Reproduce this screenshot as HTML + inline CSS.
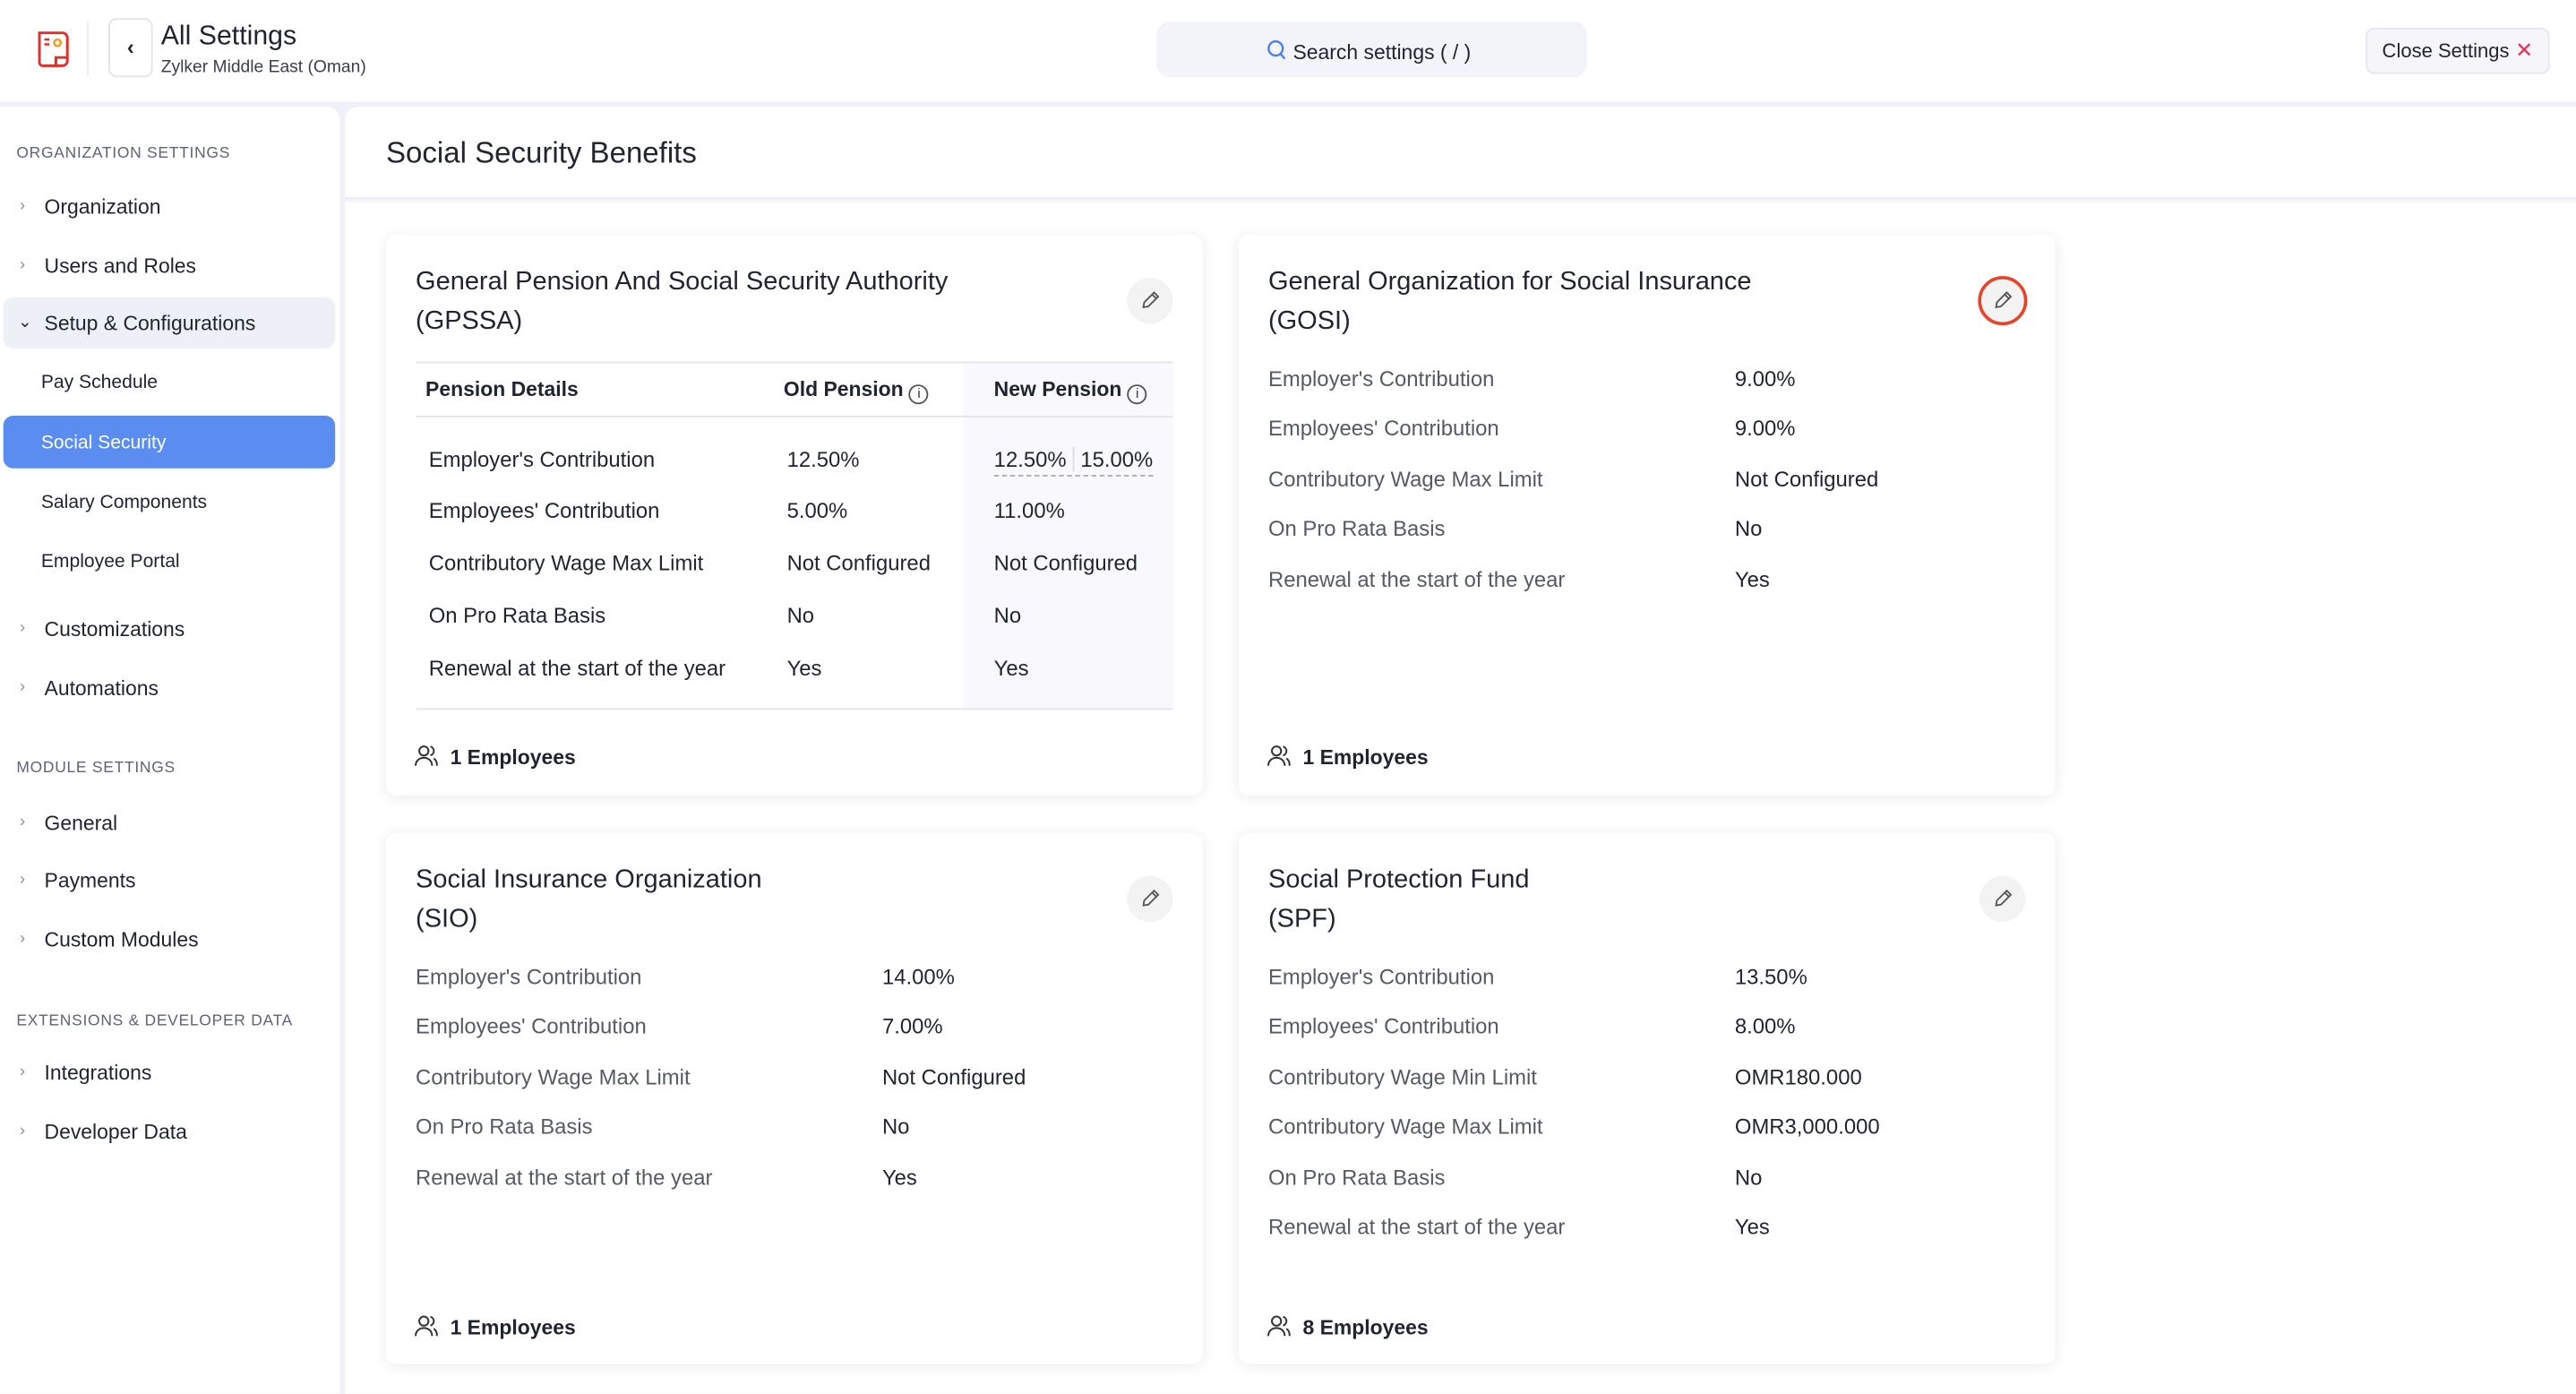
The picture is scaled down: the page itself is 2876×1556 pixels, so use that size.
<!DOCTYPE html>
<html><head><meta charset="utf-8">
<style>
*{margin:0;padding:0;box-sizing:border-box}
html,body{width:2876px;height:1556px;overflow:hidden;background:#f0f1f8}
#r{position:absolute;left:0;top:0;width:1568px;height:848px;transform:scale(1.83418);transform-origin:0 0;font-family:"Liberation Sans",sans-serif;color:#1f2430;background:#f0f1f8}
.a{position:absolute;white-space:nowrap}
.t{position:absolute;white-space:nowrap;line-height:20px;font-size:13px;margin-top:1px}
.sec{font-size:9.5px;color:#5f6472;letter-spacing:.4px;line-height:14px}
.nav{font-size:12.5px;color:#1f2430}
.chev{position:absolute;font-size:10px;color:#8a8f9c;line-height:20px;margin-top:1px}
.card{position:absolute;background:#fff;border-radius:6px;box-shadow:0 1px 8px rgba(30,40,80,.09)}
.ct{font-size:15.8px;line-height:24px;color:#1f2430;margin-top:1px}
.lb{color:#555a63}
.b{font-weight:bold;font-size:12.5px}
.edit{position:absolute;width:28px;height:28px;border-radius:50%;background:#f3f3f4}
.edit svg{position:absolute;left:7px;top:7px}
</style></head><body><div id="r">
<!-- header -->
<div class="a" style="left:0;top:0;width:1568px;height:62px;background:#fff"></div>
<svg class="a" style="left:21px;top:17px" width="24" height="26" viewBox="0 0 24 26"><path d="M3 3h14a3 3 0 0 1 3 3v12h-7v5h-8a2 2 0 0 1-2-2z" fill="none" stroke="#e0302a" stroke-width="1.6"/><path d="M13 18v5h4a3 3 0 0 0 3-3v-2" fill="none" stroke="#e0302a" stroke-width="1.6"/><path d="M6 7h3M6 10h3" stroke="#e0302a" stroke-width="1.4"/><circle cx="14" cy="9" r="2" fill="none" stroke="#f0a020" stroke-width="1.4"/></svg>
<div class="a" style="left:53px;top:13px;width:1px;height:33px;background:#ececf2"></div>
<div class="a" style="left:66px;top:11px;width:27px;height:36px;border:1px solid #e2e3ea;border-radius:5px;text-align:center;line-height:34px;font-size:13px;font-weight:bold">‹</div>
<div class="t" style="left:98px;top:11px;font-size:16.5px">All Settings</div>
<div class="t" style="left:98px;top:30px;font-size:10.5px;color:#3a3f4a">Zylker Middle East (Oman)</div>
<div class="a" style="left:704px;top:13px;width:262px;height:34px;background:#f3f3fa;border-radius:8px"></div>
<svg class="a" style="left:771px;top:24px" width="12" height="13" viewBox="0 0 12 13"><circle cx="5.5" cy="5.5" r="4.3" fill="none" stroke="#4a7ef0" stroke-width="1.3"/><path d="M8.5 8.8l2.5 3" stroke="#4a7ef0" stroke-width="1.3"/></svg>
<div class="t" style="left:787px;top:21px;font-size:12.5px">Search settings ( / )</div>
<div class="a" style="left:1440px;top:17px;width:112px;height:28px;background:#f5f5fa;border:1px solid #e6e7ee;border-radius:5px"></div>
<div class="t" style="left:1450px;top:20px;font-size:12px">Close Settings</div>
<div class="t" style="left:1531px;top:20px;font-size:13px;color:#e8325a">✕</div>
<!-- sidebar -->
<div class="a" style="left:0;top:65px;width:207px;height:783px;background:#fff;border-radius:0 8px 0 0"></div>
<div class="t sec" style="left:10px;top:86px">ORGANIZATION SETTINGS</div>
<div class="chev" style="left:12px;top:115px">›</div><div class="t nav" style="left:27px;top:115px">Organization</div>
<div class="chev" style="left:12px;top:151px">›</div><div class="t nav" style="left:27px;top:151px">Users and Roles</div>
<div class="a" style="left:2px;top:181px;width:202px;height:31px;background:#eef0f8;border-radius:6px"></div>
<div class="t nav" style="left:11px;top:186px;font-size:10px">⌄</div><div class="t nav" style="left:27px;top:186px">Setup &amp; Configurations</div>
<div class="t nav" style="left:25px;top:222px;font-size:11.5px">Pay Schedule</div>
<div class="a" style="left:2px;top:253px;width:202px;height:32px;background:#5a8def;border-radius:6px"></div>
<div class="t nav" style="left:25px;top:259px;font-size:11.5px;color:#fff">Social Security</div>
<div class="t nav" style="left:25px;top:295px;font-size:11.5px">Salary Components</div>
<div class="t nav" style="left:25px;top:331px;font-size:11.5px">Employee Portal</div>
<div class="chev" style="left:12px;top:372px">›</div><div class="t nav" style="left:27px;top:372px">Customizations</div>
<div class="chev" style="left:12px;top:408px">›</div><div class="t nav" style="left:27px;top:408px">Automations</div>
<div class="t sec" style="left:10px;top:460px">MODULE SETTINGS</div>
<div class="chev" style="left:12px;top:490px">›</div><div class="t nav" style="left:27px;top:490px">General</div>
<div class="chev" style="left:12px;top:525px">›</div><div class="t nav" style="left:27px;top:525px">Payments</div>
<div class="chev" style="left:12px;top:561px">›</div><div class="t nav" style="left:27px;top:561px">Custom Modules</div>
<div class="t sec" style="left:10px;top:614px">EXTENSIONS &amp; DEVELOPER DATA</div>
<div class="chev" style="left:12px;top:642px">›</div><div class="t nav" style="left:27px;top:642px">Integrations</div>
<div class="chev" style="left:12px;top:678px">›</div><div class="t nav" style="left:27px;top:678px">Developer Data</div>
<!-- content -->
<div class="a" style="left:210px;top:65px;width:1358px;height:783px;background:#fff;border-radius:8px 0 0 0"></div>
<div class="a" style="left:210px;top:120px;width:1358px;height:4px;background:linear-gradient(#e9eaef,rgba(255,255,255,0))"></div>
<div class="t" style="left:235px;top:81px;font-size:18px;line-height:22px;color:#222630">Social Security Benefits</div>

<!-- card 1 -->
<div class="card" style="left:235px;top:143px;width:497px;height:341px"></div>
<div class="a ct" style="left:253px;top:159px">General Pension And Social Security Authority<br>(GPSSA)</div>
<div class="edit" style="left:686px;top:169px"><svg width="14" height="14" viewBox="0 0 14 14"><path d="M3 11l.5-3L9.5 2l2.5 2.5-6 6z M8.3 3.2l2.5 2.5" fill="none" stroke="#555" stroke-width="1"/></svg></div>
<div class="a" style="left:586px;top:220px;width:128px;height:211px;background:#f8f8fd"></div>
<div class="a" style="left:253px;top:220px;width:461px;height:1px;background:#e3e4e8"></div>
<div class="a" style="left:253px;top:253px;width:461px;height:1px;background:#e3e4e8"></div>
<div class="a" style="left:253px;top:431px;width:461px;height:1px;background:#e3e4e8"></div>
<div class="t b" style="left:259px;top:226px">Pension Details</div>
<div class="t b" style="left:477px;top:226px">Old Pension <span style="display:inline-block;width:12px;height:12px;border:1px solid #555;border-radius:50%;font-size:8px;line-height:10px;text-align:center;vertical-align:-1px;font-weight:normal">i</span></div>
<div class="t b" style="left:605px;top:226px">New Pension <span style="display:inline-block;width:12px;height:12px;border:1px solid #555;border-radius:50%;font-size:8px;line-height:10px;text-align:center;vertical-align:-1px;font-weight:normal">i</span></div>
<div class="t" style="left:261px;top:269px">Employer's Contribution</div><div class="t" style="left:479px;top:269px">12.50%</div>
<div class="t" style="left:605px;top:269px;border-bottom:1px dashed #aaa;line-height:19px">12.50% <span style="border-left:1px solid #ddd;padding-left:4px">15.00%</span></div>
<div class="t" style="left:261px;top:300px">Employees' Contribution</div><div class="t" style="left:479px;top:300px">5.00%</div><div class="t" style="left:605px;top:300px">11.00%</div>
<div class="t" style="left:261px;top:332px">Contributory Wage Max Limit</div><div class="t" style="left:479px;top:332px">Not Configured</div><div class="t" style="left:605px;top:332px">Not Configured</div>
<div class="t" style="left:261px;top:364px">On Pro Rata Basis</div><div class="t" style="left:479px;top:364px">No</div><div class="t" style="left:605px;top:364px">No</div>
<div class="t" style="left:261px;top:396px">Renewal at the start of the year</div><div class="t" style="left:479px;top:396px">Yes</div><div class="t" style="left:605px;top:396px">Yes</div>
<svg class="a" style="left:252px;top:453px" width="15" height="14" viewBox="0 0 15 14"><circle cx="6" cy="4" r="2.8" fill="none" stroke="#333" stroke-width="1.1"/><path d="M1 13c0-3 2.2-4.8 5-4.8s5 1.8 5 4.8M10 1.3a2.8 2.8 0 0 1 0 5.4M12 8.6c1.3.7 2 2.2 2 4.4" fill="none" stroke="#333" stroke-width="1.1"/></svg>
<div class="t b" style="left:274px;top:450px">1 Employees</div>

<!-- card 2 -->
<div class="card" style="left:754px;top:143px;width:497px;height:341px"></div>
<div class="a ct" style="left:772px;top:159px">General Organization for Social Insurance<br>(GOSI)</div>
<div class="edit" style="border:2px solid #e8442a;width:30px;height:30px;left:1204px;top:168px"><svg width="14" height="14" viewBox="0 0 14 14" style="left:6px;top:6px"><path d="M3 11l.5-3L9.5 2l2.5 2.5-6 6z M8.3 3.2l2.5 2.5" fill="none" stroke="#555" stroke-width="1"/></svg></div>
<div class="t lb" style="left:772px;top:220px">Employer's Contribution</div><div class="t" style="left:1056px;top:220px">9.00%</div>
<div class="t lb" style="left:772px;top:250px">Employees' Contribution</div><div class="t" style="left:1056px;top:250px">9.00%</div>
<div class="t lb" style="left:772px;top:281px">Contributory Wage Max Limit</div><div class="t" style="left:1056px;top:281px">Not Configured</div>
<div class="t lb" style="left:772px;top:311px">On Pro Rata Basis</div><div class="t" style="left:1056px;top:311px">No</div>
<div class="t lb" style="left:772px;top:342px">Renewal at the start of the year</div><div class="t" style="left:1056px;top:342px">Yes</div>
<svg class="a" style="left:771px;top:453px" width="15" height="14" viewBox="0 0 15 14"><circle cx="6" cy="4" r="2.8" fill="none" stroke="#333" stroke-width="1.1"/><path d="M1 13c0-3 2.2-4.8 5-4.8s5 1.8 5 4.8M10 1.3a2.8 2.8 0 0 1 0 5.4M12 8.6c1.3.7 2 2.2 2 4.4" fill="none" stroke="#333" stroke-width="1.1"/></svg>
<div class="t b" style="left:793px;top:450px">1 Employees</div>

<!-- card 3 -->
<div class="card" style="left:235px;top:507px;width:497px;height:323px"></div>
<div class="a ct" style="left:253px;top:523px">Social Insurance Organization<br>(SIO)</div>
<div class="edit" style="left:686px;top:533px"><svg width="14" height="14" viewBox="0 0 14 14"><path d="M3 11l.5-3L9.5 2l2.5 2.5-6 6z M8.3 3.2l2.5 2.5" fill="none" stroke="#555" stroke-width="1"/></svg></div>
<div class="t lb" style="left:253px;top:584px">Employer's Contribution</div><div class="t" style="left:537px;top:584px">14.00%</div>
<div class="t lb" style="left:253px;top:614px">Employees' Contribution</div><div class="t" style="left:537px;top:614px">7.00%</div>
<div class="t lb" style="left:253px;top:645px">Contributory Wage Max Limit</div><div class="t" style="left:537px;top:645px">Not Configured</div>
<div class="t lb" style="left:253px;top:675px">On Pro Rata Basis</div><div class="t" style="left:537px;top:675px">No</div>
<div class="t lb" style="left:253px;top:706px">Renewal at the start of the year</div><div class="t" style="left:537px;top:706px">Yes</div>
<svg class="a" style="left:252px;top:800px" width="15" height="14" viewBox="0 0 15 14"><circle cx="6" cy="4" r="2.8" fill="none" stroke="#333" stroke-width="1.1"/><path d="M1 13c0-3 2.2-4.8 5-4.8s5 1.8 5 4.8M10 1.3a2.8 2.8 0 0 1 0 5.4M12 8.6c1.3.7 2 2.2 2 4.4" fill="none" stroke="#333" stroke-width="1.1"/></svg>
<div class="t b" style="left:274px;top:797px">1 Employees</div>

<!-- card 4 -->
<div class="card" style="left:754px;top:507px;width:497px;height:323px"></div>
<div class="a ct" style="left:772px;top:523px">Social Protection Fund<br>(SPF)</div>
<div class="edit" style="left:1205px;top:533px"><svg width="14" height="14" viewBox="0 0 14 14"><path d="M3 11l.5-3L9.5 2l2.5 2.5-6 6z M8.3 3.2l2.5 2.5" fill="none" stroke="#555" stroke-width="1"/></svg></div>
<div class="t lb" style="left:772px;top:584px">Employer's Contribution</div><div class="t" style="left:1056px;top:584px">13.50%</div>
<div class="t lb" style="left:772px;top:614px">Employees' Contribution</div><div class="t" style="left:1056px;top:614px">8.00%</div>
<div class="t lb" style="left:772px;top:645px">Contributory Wage Min Limit</div><div class="t" style="left:1056px;top:645px">OMR180.000</div>
<div class="t lb" style="left:772px;top:675px">Contributory Wage Max Limit</div><div class="t" style="left:1056px;top:675px">OMR3,000.000</div>
<div class="t lb" style="left:772px;top:706px">On Pro Rata Basis</div><div class="t" style="left:1056px;top:706px">No</div>
<div class="t lb" style="left:772px;top:736px">Renewal at the start of the year</div><div class="t" style="left:1056px;top:736px">Yes</div>
<svg class="a" style="left:771px;top:800px" width="15" height="14" viewBox="0 0 15 14"><circle cx="6" cy="4" r="2.8" fill="none" stroke="#333" stroke-width="1.1"/><path d="M1 13c0-3 2.2-4.8 5-4.8s5 1.8 5 4.8M10 1.3a2.8 2.8 0 0 1 0 5.4M12 8.6c1.3.7 2 2.2 2 4.4" fill="none" stroke="#333" stroke-width="1.1"/></svg>
<div class="t b" style="left:793px;top:797px">8 Employees</div>
</div></body></html>
